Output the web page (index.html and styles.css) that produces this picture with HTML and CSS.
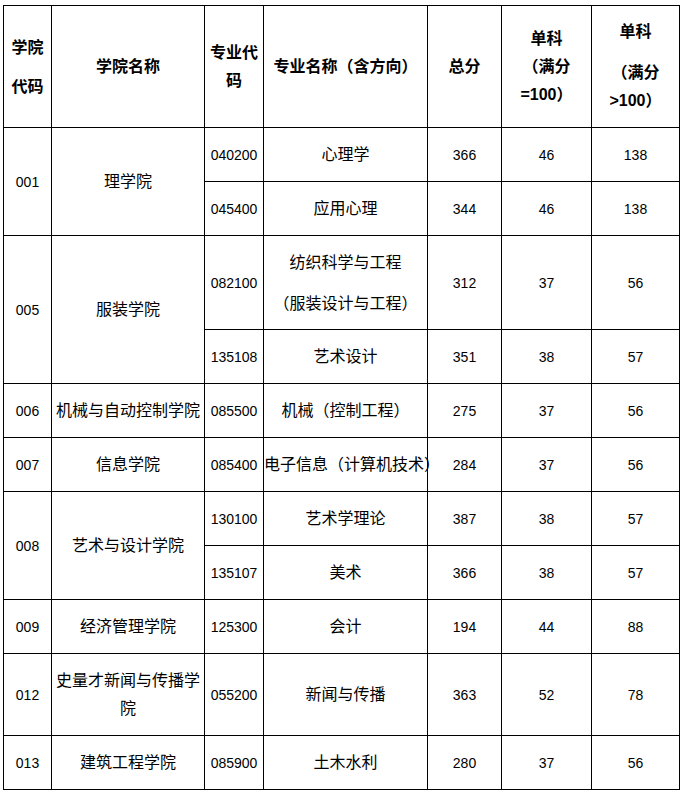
FILE: index.html
```
<!DOCTYPE html>
<html lang="zh-CN">
<head>
<meta charset="utf-8">
<title>分数线</title>
<link rel="stylesheet" href="styles.css">
</head>
<body>
<table class="score-table">
  <colgroup>
    <col class="c1"><col class="c2"><col class="c3"><col class="c4"><col class="c5"><col class="c6"><col class="c7">
  </colgroup>
  <thead>
    <tr class="row-head">
      <th class="h-code">学院<br>代码</th>
      <th>学院名称</th>
      <th class="h-major-code">专业代码</th>
      <th>专业名称（含方向）</th>
      <th>总分</th>
      <th class="h-single">单科<br>（满分<br>=100）</th>
      <th class="h-single2"><div class="first">单科</div><div>（满分</div><div>&gt;100）</div></th>
    </tr>
  </thead>
  <tbody>
    <tr class="row">
      <td class="num" rowspan="2">001</td>
      <td rowspan="2">理学院</td>
      <td class="num">040200</td>
      <td>心理学</td>
      <td class="num">366</td>
      <td class="num">46</td>
      <td class="num">138</td>
    </tr>
    <tr class="row">
      <td class="num">045400</td>
      <td>应用心理</td>
      <td class="num">344</td>
      <td class="num">46</td>
      <td class="num">138</td>
    </tr>
    <tr class="row-tall">
      <td class="num" rowspan="2">005</td>
      <td rowspan="2">服装学院</td>
      <td class="num">082100</td>
      <td class="two-line">纺织科学与工程<br>（服装设计与工程）</td>
      <td class="num">312</td>
      <td class="num">37</td>
      <td class="num">56</td>
    </tr>
    <tr class="row">
      <td class="num">135108</td>
      <td>艺术设计</td>
      <td class="num">351</td>
      <td class="num">38</td>
      <td class="num">57</td>
    </tr>
    <tr class="row">
      <td class="num">006</td>
      <td>机械与自动控制学院</td>
      <td class="num">085500</td>
      <td>机械（控制工程）</td>
      <td class="num">275</td>
      <td class="num">37</td>
      <td class="num">56</td>
    </tr>
    <tr class="row">
      <td class="num">007</td>
      <td>信息学院</td>
      <td class="num">085400</td>
      <td class="left">电子信息（计算机技术）</td>
      <td class="num">284</td>
      <td class="num">37</td>
      <td class="num">56</td>
    </tr>
    <tr class="row">
      <td class="num" rowspan="2">008</td>
      <td rowspan="2">艺术与设计学院</td>
      <td class="num">130100</td>
      <td>艺术学理论</td>
      <td class="num">387</td>
      <td class="num">38</td>
      <td class="num">57</td>
    </tr>
    <tr class="row">
      <td class="num">135107</td>
      <td>美术</td>
      <td class="num">366</td>
      <td class="num">38</td>
      <td class="num">57</td>
    </tr>
    <tr class="row">
      <td class="num">009</td>
      <td>经济管理学院</td>
      <td class="num">125300</td>
      <td>会计</td>
      <td class="num">194</td>
      <td class="num">44</td>
      <td class="num">88</td>
    </tr>
    <tr class="row-mid">
      <td class="num">012</td>
      <td class="wrap">史量才新闻与传播学院</td>
      <td class="num">055200</td>
      <td>新闻与传播</td>
      <td class="num">363</td>
      <td class="num">52</td>
      <td class="num">78</td>
    </tr>
    <tr class="row">
      <td class="num">013</td>
      <td>建筑工程学院</td>
      <td class="num">085900</td>
      <td>土木水利</td>
      <td class="num">280</td>
      <td class="num">37</td>
      <td class="num">56</td>
    </tr>
  </tbody>
</table>
</body>
</html>
```

FILE: styles.css
```
html, body {
  background: #ffffff;
}
body {
  margin: 5px 0 0 3px;
  font-family: "Liberation Sans", "Noto Sans CJK SC", sans-serif;
  font-size: 16px;
  color: #000000;
}
.score-table {
  border-collapse: collapse;
  table-layout: fixed;
  width: 676px;
}
.c1 { width: 48px; }
.c2 { width: 153px; }
.c3 { width: 59px; }
.c4 { width: 164px; }
.c5 { width: 74px; }
.c6 { width: 90px; }
.c7 { width: 88px; }

.score-table th,
.score-table td {
  border: 1px solid #000000;
  padding: 0 1px;
  text-align: center;
  vertical-align: middle;
  line-height: 28px;
  white-space: normal;
  word-break: break-all;
}
.score-table th {
  font-weight: bold;
  font-size: 16px;
}
.row-head { height: 122px; }
.row { height: 54px; }
.row-tall { height: 94px; }
.row-mid { height: 82px; }

.score-table th.h-code { line-height: 39px; }
.h-single2 .first { margin-bottom: 13px; }

.score-table td.num {
  font-size: 14px;
}
.score-table td.two-line { line-height: 41px; }
.score-table td.left {
  text-align: left;
  padding: 0;
  white-space: nowrap;
}
```
